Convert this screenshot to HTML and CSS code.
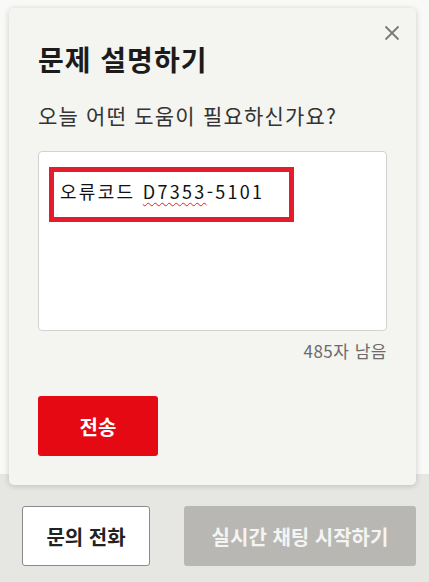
FILE: index.html
```html
<!DOCTYPE html>
<html lang="ko">
<head>
    <meta charset="UTF-8">
    <meta name="viewport" content="width=device-width, initial-scale=1.0">
    <title>문제 설명하기</title>
    <link rel="stylesheet" href="styles.css">
</head>
<body>
    <div class="dialog">
        <button class="close-btn" aria-label="닫기">
            <svg width="16" height="16" viewBox="0 0 16 16">
                <path d="M1.5 1.5L14.5 14.5M14.5 1.5L1.5 14.5" stroke="#7a7a7a" stroke-width="1.8" fill="none"/>
            </svg>
        </button>
        <h1 class="dialog-title">문제 설명하기</h1>
        <p class="dialog-question">오늘 어떤 도움이 필요하신가요?</p>
        <div class="text-box">
            <div class="highlight">
                <span class="entry">오류코드 <span class="misspelled">D7353</span>-5101</span>
            </div>
        </div>
        <div class="counter">485자 남음</div>
        <button class="submit-btn">전송</button>
    </div>

    <div class="footer-row">
        <button class="call-btn">문의 전화</button>
        <button class="chat-btn">실시간 채팅 시작하기</button>
    </div>
</body>
</html>
```

FILE: styles.css
```css
body {
    margin: 0;
    font-family: "Noto Sans CJK KR", "Noto Sans", sans-serif;
    background: linear-gradient(#f9f9f8 0, #f9f9f8 474px, #e6e6e3 474px);
    min-height: 582px;
    color: #222;
}

.dialog {
    position: relative;
    margin: 8px 13px 0 9px;
    height: 477px;
    box-sizing: border-box;
    padding: 0 29px;
    background-color: #f4f4f1;
    border-radius: 5px;
    box-shadow: 0 1px 6px rgba(0, 0, 0, 0.18);
    overflow: hidden;
}

.close-btn {
    position: absolute;
    top: 17px;
    right: 16px;
    border: none;
    background: none;
    padding: 0;
    cursor: pointer;
}

.dialog-title {
    margin: 0;
    padding-top: 33px;
    font-size: 28px;
    line-height: 36px;
    font-weight: bold;
    letter-spacing: 1px;
    color: #1b1b1b;
}

.dialog-question {
    margin: 24px 0 0;
    font-size: 21px;
    line-height: 28px;
    letter-spacing: 1.2px;
    color: #333;
}

.text-box {
    margin-top: 22px;
    height: 180px;
    box-sizing: border-box;
    background-color: #fff;
    border: 1px solid #d2d2d2;
    border-radius: 4px;
    padding: 15px 0 0 10px;
}

.highlight {
    width: 229px;
    height: 38px;
    border: 5px solid #e31d2b;
    padding: 7px 0 0 6px;
    box-sizing: content-box;
}

.entry {
    font-size: 18px;
    line-height: 24px;
    color: #111;
    letter-spacing: 2.3px;
}

.misspelled {
    text-decoration: underline wavy #d22;
    text-underline-offset: 3px;
    text-decoration-thickness: 1px;
}

.counter {
    margin-top: 8px;
    text-align: right;
    font-size: 17px;
    line-height: 24px;
    letter-spacing: 0.5px;
    color: #6b6b6b;
}

.submit-btn {
    margin-top: 33px;
    width: 120px;
    height: 60px;
    border: none;
    border-radius: 3px;
    background-color: #e50914;
    color: #fff;
    font-family: inherit;
    font-size: 20px;
    font-weight: bold;
}

.footer-row {
    display: flex;
    gap: 34px;
    margin: 21px 13px 0 22px;
}

.call-btn {
    width: 128px;
    height: 60px;
    background-color: #fff;
    border: 1px solid #8a8a8a;
    border-radius: 3px;
    font-family: inherit;
    font-size: 20px;
    font-weight: bold;
    color: #222;
}

.chat-btn {
    flex: 1;
    height: 60px;
    border: none;
    border-radius: 3px;
    background-color: #b8b7b3;
    color: #f4f4f2;
    font-family: inherit;
    font-size: 20px;
    font-weight: bold;
}
```
